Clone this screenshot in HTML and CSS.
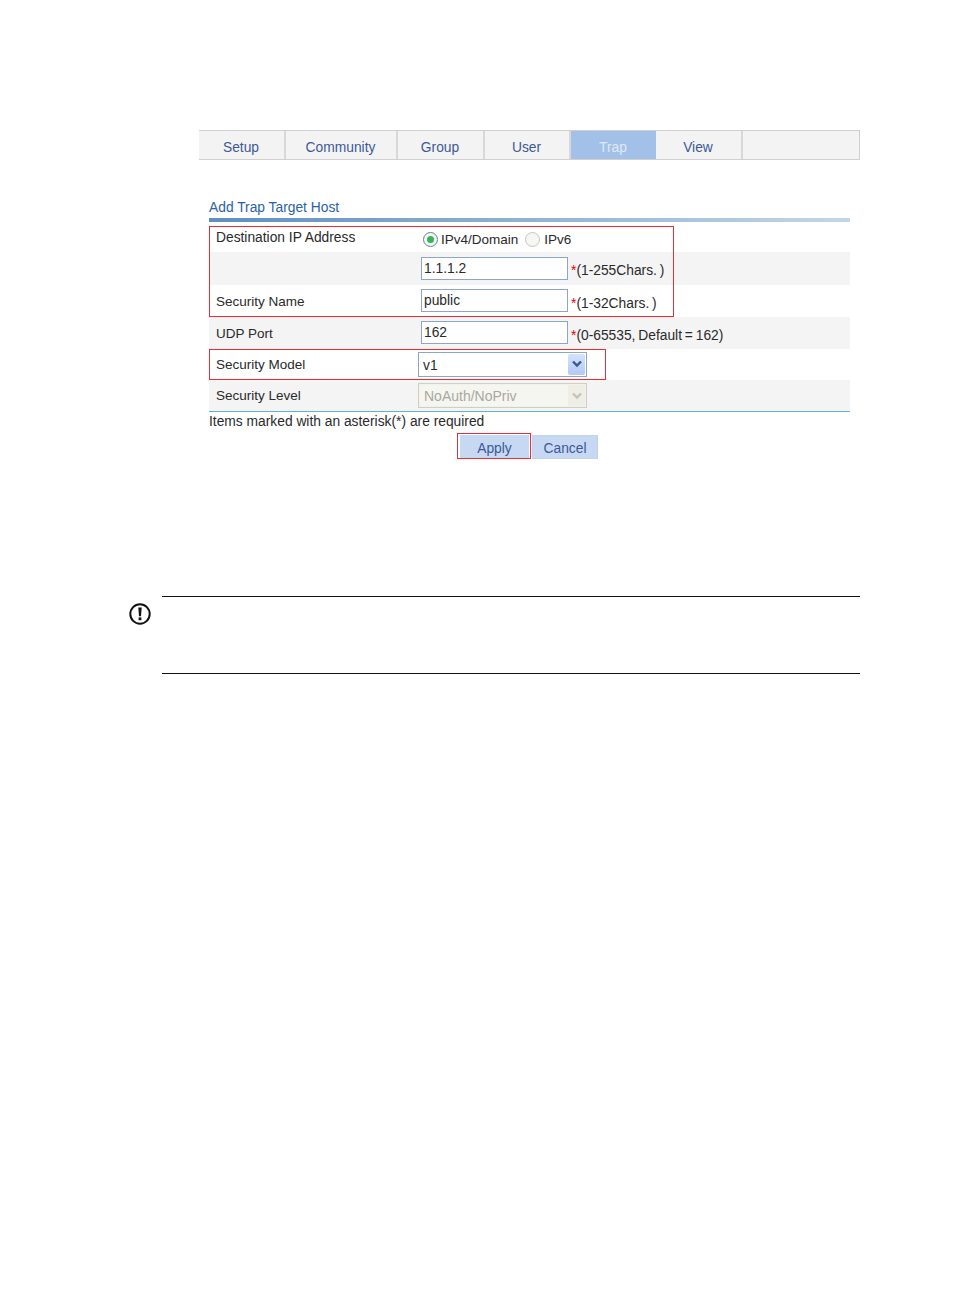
FILE: index.html
```html
<!DOCTYPE html>
<html>
<head>
<meta charset="utf-8">
<title>Add Trap Target Host</title>
<link rel="stylesheet" href="styles.css">
</head>
<body>
<div class="shot">
  <nav class="tabs">
    <div class="tab w87">Setup</div>
    <div class="tab w112">Community</div>
    <div class="tab w87">Group</div>
    <div class="tab w86">User</div>
    <div class="tab w85 active">Trap</div>
    <div class="tab w87">View</div>
    <div class="tab rest"></div>
  </nav>
  <section class="form">
    <h2 class="title">Add Trap Target Host</h2>
    <div class="bar"></div>
    <div class="rows">
      <div class="row h30">
        <div class="label wide">Destination IP Address</div>
        <div class="radios">
          <span class="radio on"><i></i></span><span class="rlabel">IPv4/Domain</span>
          <span class="radio"></span><span class="rlabel">IPv6</span>
        </div>
      </div>
      <div class="row h33 gray">
        <div class="label"></div>
        <div class="input">1.1.1.2</div>
        <div class="hint"><b>*</b>(1-255Chars. )</div>
      </div>
      <div class="row h32">
        <div class="label">Security Name</div>
        <div class="input lift">public</div>
        <div class="hint"><b>*</b>(1-32Chars. )</div>
      </div>
      <div class="row h32 gray">
        <div class="label">UDP Port</div>
        <div class="input lift">162</div>
        <div class="hint"><b>*</b>(0-65535, Default = 162)</div>
      </div>
      <div class="row h31">
        <div class="label">Security Model</div>
        <div class="select lift">
          <span class="value">v1</span>
          <span class="arrow"><svg width="12" height="8" viewBox="0 0 12 8"><path d="M2 1.5 6 5.5 10 1.5" fill="none" stroke="#3a5a8c" stroke-width="2.4"/></svg></span>
        </div>
      </div>
      <div class="row h31 gray">
        <div class="label">Security Level</div>
        <div class="select off">
          <span class="value">NoAuth/NoPriv</span>
          <span class="arrow"><svg width="12" height="8" viewBox="0 0 12 8"><path d="M2 1.5 6 5.5 10 1.5" fill="none" stroke="#c4c4b6" stroke-width="2.4"/></svg></span>
        </div>
      </div>
    </div>
    <p class="note">Items marked with an asterisk(*) are required</p>
    <div class="buttons">
      <div class="btn apply">Apply</div>
      <div class="btn cancel">Cancel</div>
    </div>
    <div class="mark m1"></div>
    <div class="mark m2"></div>
    <div class="mark m3"></div>
  </section>
  <section class="notice">
    <svg class="icon" width="24" height="24" viewBox="0 0 24 24">
      <circle cx="12" cy="12" r="9.7" fill="none" stroke="#111" stroke-width="2"/>
      <path d="M10.3 5.6h3.4l-.7 8.6h-2z" fill="#111"/>
      <rect x="10.6" y="15.4" width="2.8" height="2.8" fill="#111"/>
    </svg>
    <div class="box"></div>
  </section>
</div>
</body>
</html>
```
FILE: styles.css
```css
html, body { margin: 0; padding: 0; background: #fff; }
body { font-family: "Liberation Sans", Arial, sans-serif; font-size: 13.8px; color: #2a2a2a; }
.shot { width: 954px; height: 1296px; padding-top: 130px; box-sizing: border-box; overflow: hidden; }

.tabs { display: flex; margin-left: 199px; width: 661px; height: 30px; box-sizing: border-box; background: #f3f3f3; border: 1px solid #d0d0d0; border-left: 0; }
.tab { box-sizing: border-box; height: 28px; line-height: 34px; padding-right: 1px; text-align: center; color: #3b5998; border-right: 2px solid #d8d8d8; }
.w85 { width: 85px; }
.w86 { width: 86px; }
.w87 { width: 87px; }
.w112 { width: 112px; }
.tab.active { background: #a3c1e8; color: #dfe8f5; border-right: 0; }
.rest { flex: 1; border-right: 0; }

.form { position: relative; margin: 39px 0 0 209px; width: 641px; }
.title { margin: 0; height: 19px; font-size: 13.8px; line-height: 18px; font-weight: normal; color: #2a62a8; }
.bar { height: 4px; background: linear-gradient(to right, #5f8fbd, #c3d6e8); }
.rows { border-bottom: 1px solid #62b0e0; }
.row { display: flex; align-items: center; }
.h30 { height: 30px; }
.h31 { height: 31px; }
.h32 { height: 32px; }
.h33 { height: 33px; }
.gray { background: #f4f4f4; }
.label { width: 212px; box-sizing: border-box; padding-left: 7px; font-size: 13.5px; }
.label.wide { font-size: 13.8px; }
.radios { display: flex; align-items: center; margin-left: 2px; margin-top: 4px; font-size: 13.5px; }
.radio { width: 13px; height: 13px; border: 1px solid #c4c8c8; border-radius: 50%; background: #f6f6f2; display: flex; align-items: center; justify-content: center; margin-right: 4px; }
.radio.on { border-color: #5f84a4; margin-right: 3px; }
.radio i { width: 7px; height: 7px; border-radius: 50%; background: #35b45a; }
.rlabel { margin-right: 7px; }
.input { width: 147px; height: 23px; line-height: 21px; box-sizing: border-box; padding-left: 2px; background: #fff; border: 1px solid #8aa7c7; }
.lift { margin-top: -1px; }
.hint { margin-left: 3px; padding-top: 4px; word-spacing: -1px; }
.hint b { color: #e00; font-weight: normal; }
.select { display: flex; width: 169px; height: 25px; margin-left: -3px; box-sizing: border-box; background: #fff; border: 1px solid #8aa7c7; padding: 1px; }
.value { flex: 1; line-height: 23px; padding-left: 3px; }
.arrow { width: 17px; display: flex; align-items: center; justify-content: center; background: linear-gradient(#d6e2fb, #b3c8f5); border-radius: 2px; }
.select.off { background: #f2f2ec; border-color: #cfcfc4; }
.select.off .value { color: #a8a8a0; background: #f6f6f0; font-size: 14px; padding-left: 4px; }
.select.off .arrow { background: #eeeee6; }
.note { margin: 1px 0 0; height: 18px; line-height: 18px; }
.buttons { display: flex; margin: 4px 0 0 251px; }
.btn { height: 24px; line-height: 28px; text-align: center; background: #c7d8f2; color: #3b5998; box-sizing: border-box; }
.apply { width: 69px; margin-right: 3px; }
.cancel { width: 66px; border: 1px solid #bfd3ee; line-height: 26px; }

.mark { position: absolute; box-sizing: border-box; border: 1px solid #ee2a33; pointer-events: none; }
.m1 { left: 0; top: 27px; width: 465px; height: 91px; }
.m2 { left: 0; top: 150px; width: 397px; height: 31px; }
.m3 { left: 248px; top: 234px; width: 74px; height: 26px; }

.notice { position: relative; margin: 137px 0 0 162px; width: 698px; }
.icon { position: absolute; left: -34px; top: 6px; }
.box { height: 78px; box-sizing: border-box; border-top: 1px solid #111; border-bottom: 1px solid #111; }
```
